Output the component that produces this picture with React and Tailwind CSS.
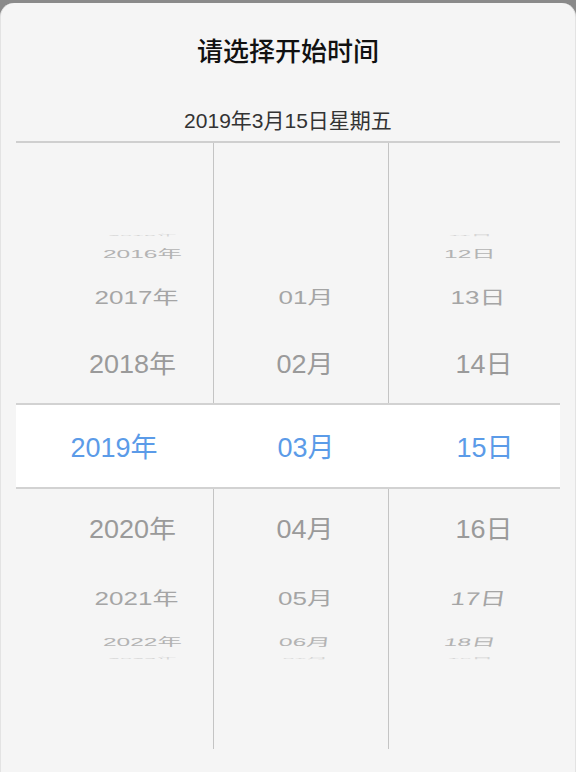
import React from "react";

const FONT = { fontFamily: '"Liberation Sans", "Noto Sans CJK SC", sans-serif' };

const cols = [
  {
    top: [
      { t: "2015年", size: "text-[24px]", cls: "scale-y-[0.08] scale-x-[0.9]", color: "text-[#d6d6d6]", h: "h-[6px]", pad: "pl-[56px]" },
      { t: "2016年", size: "text-[24.5px]", cls: "scale-y-[0.45]", color: "text-[#b3b3b3]", h: "h-[32px]", pad: "pl-[56px]" },
      { t: "2017年", size: "text-[26px]", cls: "scale-y-[0.7]", color: "text-[#a5a5a5]", h: "h-[56px]", pad: "pl-[44px]" },
      { t: "2018年", size: "text-[27px]", cls: "scale-y-[0.93]", color: "text-[#9a9a9a]", h: "h-[79px]", pad: "pl-[36px]" },
    ],
    mid: { t: "2019年", pad: "pr-[2px]" },
    bottom: [
      { t: "2020年", size: "text-[27px]", cls: "scale-y-[0.93]", color: "text-[#9a9a9a]", h: "h-[78px]", pad: "pl-[36px]" },
      { t: "2021年", size: "text-[26px]", cls: "scale-y-[0.7]", color: "text-[#a5a5a5]", h: "h-[60px]", pad: "pl-[44px]" },
      { t: "2022年", size: "text-[24.5px]", cls: "scale-y-[0.45]", color: "text-[#b3b3b3]", h: "h-[26px]", pad: "pl-[56px]" },
      { t: "2023年", size: "text-[24px]", cls: "scale-y-[0.08] scale-x-[0.9]", color: "text-[#d6d6d6]", h: "h-[6px]", pad: "pl-[56px]" },
    ],
  },
  {
    top: [
      { t: "01月", size: "text-[26px]", cls: "scale-y-[0.7]", color: "text-[#a5a5a5]", h: "h-[56px]", pad: "pl-[10px]" },
      { t: "02月", size: "text-[27px]", cls: "scale-y-[0.93]", color: "text-[#9a9a9a]", h: "h-[79px]", pad: "pl-[8px]" },
    ],
    mid: { t: "03月", pad: "pl-[9px]" },
    bottom: [
      { t: "04月", size: "text-[27px]", cls: "scale-y-[0.93]", color: "text-[#9a9a9a]", h: "h-[78px]", pad: "pl-[8px]" },
      { t: "05月", size: "text-[26px]", cls: "scale-y-[0.7]", color: "text-[#a5a5a5]", h: "h-[60px]", pad: "pl-[9px]" },
      { t: "06月", size: "text-[24.5px]", cls: "scale-y-[0.45] -skew-x-3", color: "text-[#b3b3b3]", h: "h-[26px]", pad: "pl-[8px]" },
      { t: "07月", size: "text-[24px]", cls: "scale-y-[0.08] scale-x-[0.9]", color: "text-[#d6d6d6]", h: "h-[6px]", pad: "pl-[8px]" },
    ],
  },
  {
    top: [
      { t: "11日", size: "text-[24px]", cls: "scale-y-[0.08] scale-x-[0.9]", color: "text-[#d6d6d6]", h: "h-[6px]", pad: "pr-[8px]" },
      { t: "12日", size: "text-[24.5px]", cls: "scale-y-[0.45]", color: "text-[#b3b3b3]", h: "h-[32px]", pad: "pr-[8px]" },
      { t: "13日", size: "text-[26px]", cls: "scale-y-[0.7]", color: "text-[#a5a5a5]", h: "h-[56px]", pad: "pl-[8px]" },
      { t: "14日", size: "text-[27px]", cls: "scale-y-[0.93]", color: "text-[#9a9a9a]", h: "h-[79px]", pad: "pl-[20px]" },
    ],
    mid: { t: "15日", pad: "pl-[22px]" },
    bottom: [
      { t: "16日", size: "text-[27px]", cls: "scale-y-[0.93]", color: "text-[#9a9a9a]", h: "h-[78px]", pad: "pl-[20px]" },
      { t: "17日", size: "text-[26px]", cls: "scale-y-[0.7] -skew-x-6", color: "text-[#a5a5a5]", h: "h-[60px]", pad: "pl-[8px]" },
      { t: "18日", size: "text-[24.5px]", cls: "scale-y-[0.45] -skew-x-6", color: "text-[#b3b3b3]", h: "h-[26px]", pad: "pr-[8px]" },
      { t: "19日", size: "text-[24px]", cls: "scale-y-[0.08] scale-x-[0.9]", color: "text-[#d6d6d6]", h: "h-[6px]", pad: "pr-[8px]" },
    ],
  },
];

const colBorder = ["border-r border-[#c4c4c4]", "border-r border-[#c4c4c4]", ""];

function Item({ it }) {
  return (
    <div className={`flex items-center justify-center ${it.h} ${it.pad}`}>
      <span className={`inline-block leading-none whitespace-nowrap translate-y-[2px] ${it.size} ${it.color} ${it.cls}`}>{it.t}</span>
    </div>
  );
}

export default function App() {
  return (
    <div className="h-[772px] w-[576px] bg-[#8a8a8a] pt-[3px] overflow-hidden" style={FONT}>
      <div className="h-full rounded-t-[14px] bg-[#f5f5f5] border-x border-[#e3e3e3] flex flex-col">
        <div className="pt-[29px] h-[40px] box-content flex items-center justify-center">
          <span className="text-[26px] leading-none font-medium text-[#111111]">请选择开始时间</span>
        </div>
        <div className="mt-[34px] h-[30px] flex items-center justify-center">
          <span className="text-[21px] leading-none text-[#333333] -translate-y-[1px]">2019年3月15日星期五</span>
        </div>
        <div className="mt-[5px] mx-[15px] border-t-2 border-[#cfcfcf]">
          <div className="grid grid-cols-[198px_175px_170px] h-[260px]">
            {cols.map((c, i) => (
              <div key={i} className={`flex flex-col justify-end ${colBorder[i]}`}>
                {c.top.map((it) => (
                  <Item key={it.t} it={it} />
                ))}
              </div>
            ))}
          </div>
          <div className="grid grid-cols-[198px_175px_170px] h-[86px] bg-white border-y-2 border-[#d2d2d2]">
            {cols.map((c, i) => (
              <div key={i} className={`flex items-center justify-center ${c.mid.pad}`}>
                <span className="text-[27px] leading-none text-[#5b9be8] translate-y-[2px]">{c.mid.t}</span>
              </div>
            ))}
          </div>
          <div className="grid grid-cols-[198px_175px_170px] h-[260px]">
            {cols.map((c, i) => (
              <div key={i} className={`flex flex-col justify-start ${colBorder[i]}`}>
                {c.bottom.map((it) => (
                  <Item key={it.t} it={it} />
                ))}
              </div>
            ))}
          </div>
        </div>
      </div>
    </div>
  );
}
